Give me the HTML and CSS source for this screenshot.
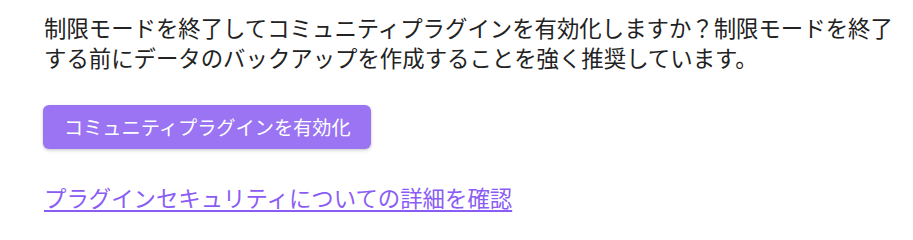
FILE: index.html
```html
<!DOCTYPE html>
<html lang="ja">
<head>
<meta charset="utf-8">
<link rel="stylesheet" href="styles.css">
</head>
<body>
<div class="panel">
  <p class="message">制限モードを終了してコミュニティプラグインを有効化しますか？制限モードを終了する前にデータのバックアップを作成することを強く推奨しています。</p>
  <div class="actions">
    <button class="mod-cta">コミュニティプラグインを有効化</button>
  </div>
  <a class="more-link" href="#">プラグインセキュリティについての詳細を確認</a>
</div>
</body>
</html>
```

FILE: styles.css
```css
html, body {
  margin: 0;
  padding: 0;
  background: #ffffff;
}

.panel {
  padding: 12px 0 0 44px;
  width: 852px;
  font-family: "Noto Sans CJK JP", "Noto Sans", sans-serif;
  color: #222222;
  font-size: 22.4px;
  line-height: 30px;
}

.message {
  margin: 0;
}

.actions {
  margin-top: 33px;
  margin-left: -1px;
}

.mod-cta {
  display: inline-flex;
  align-items: center;
  height: 44px;
  padding: 0 20px 0 21px;
  border: none;
  border-radius: 6px;
  background: #9a74f3;
  color: #ffffff;
  font-family: "Noto Sans CJK JP", "Noto Sans", sans-serif;
  font-size: 19.2px;
  box-shadow: 0 1px 3px rgba(0, 0, 0, 0.18), 0 2px 5px rgba(0, 0, 0, 0.06);
  cursor: pointer;
}

.more-link {
  display: inline-block;
  margin-top: 33px;
  color: #8a5cf5;
  text-decoration: underline;
  text-decoration-thickness: 2px;
  text-underline-offset: 3px;
}
```
